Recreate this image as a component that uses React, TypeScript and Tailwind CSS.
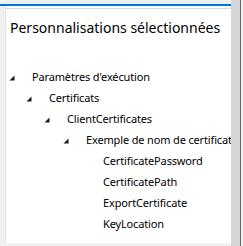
import React from "react";

const Tri = () => (
  <svg width="6" height="6" viewBox="0 0 6 6" className="shrink-0">
    <polygon points="5.5,0.5 5.5,5.5 0.5,5.5" fill="#1a1a1a" />
  </svg>
);

type Item = { label: string; level: number; expander: boolean };

const items: Item[] = [
  { label: "Paramètres d'exécution", level: 0, expander: true },
  { label: "Certificats", level: 1, expander: true },
  { label: "ClientCertificates", level: 2, expander: true },
  { label: "Exemple de nom de certificat", level: 3, expander: true },
  { label: "CertificatePassword", level: 4, expander: false },
  { label: "CertificatePath", level: 4, expander: false },
  { label: "ExportCertificate", level: 4, expander: false },
  { label: "KeyLocation", level: 4, expander: false },
];

const pads = ["pl-[3px]", "pl-[20px]", "pl-[38px]", "pl-[57px]", "pl-[74px]"];

export default function App() {
  return (
    <div
      className="w-[243px] h-[246px] flex bg-[#f0f0f0] overflow-hidden"
      style={{ fontFamily: '"Noto Sans", "Open Sans", sans-serif' }}
    >
      <div className="w-[231px] shrink-0 min-w-0 flex flex-col">
        <div className="h-[4px] shrink-0" />
        <div className="h-[2px] shrink-0 bg-[#0078d7]" />
        <div className="flex flex-1 min-h-0">
          <div className="w-[5px] shrink-0 bg-[#f0f0f0]" />
          <div className="w-[1px] shrink-0 bg-[#e3e3e3]" />
          <div className="flex-1 min-w-0 overflow-hidden flex flex-col bg-white">
            <div className="h-[2px] shrink-0" />
            <div className="h-[1px] shrink-0 bg-[#dadada]" />
            <div className="pl-[4px] pt-[9px] text-[14px] leading-[20px] text-black whitespace-nowrap shrink-0">
              Personnalisations sélectionnées
            </div>
            <div className="mt-[29px] flex flex-col text-[11px] tracking-[-0.15px] text-black shrink-0">
              {items.map((it, i) => (
                <div key={i} className={`h-[21px] flex items-center whitespace-nowrap ${pads[it.level]}`}>
                  {it.expander ? <Tri /> : <span className="w-[6px] shrink-0" />}
                  <span className="ml-[17px]">{it.label}</span>
                </div>
              ))}
            </div>
          </div>
        </div>
        <div className="h-[3px] shrink-0" />
      </div>
      <div className="w-[9px] shrink-0 bg-[#d6d6d6]" />
      <div className="w-[1px] shrink-0 bg-[#5f6670]" />
      <div className="w-[2px] shrink-0 bg-[#f0f0f0]" />
    </div>
  );
}
